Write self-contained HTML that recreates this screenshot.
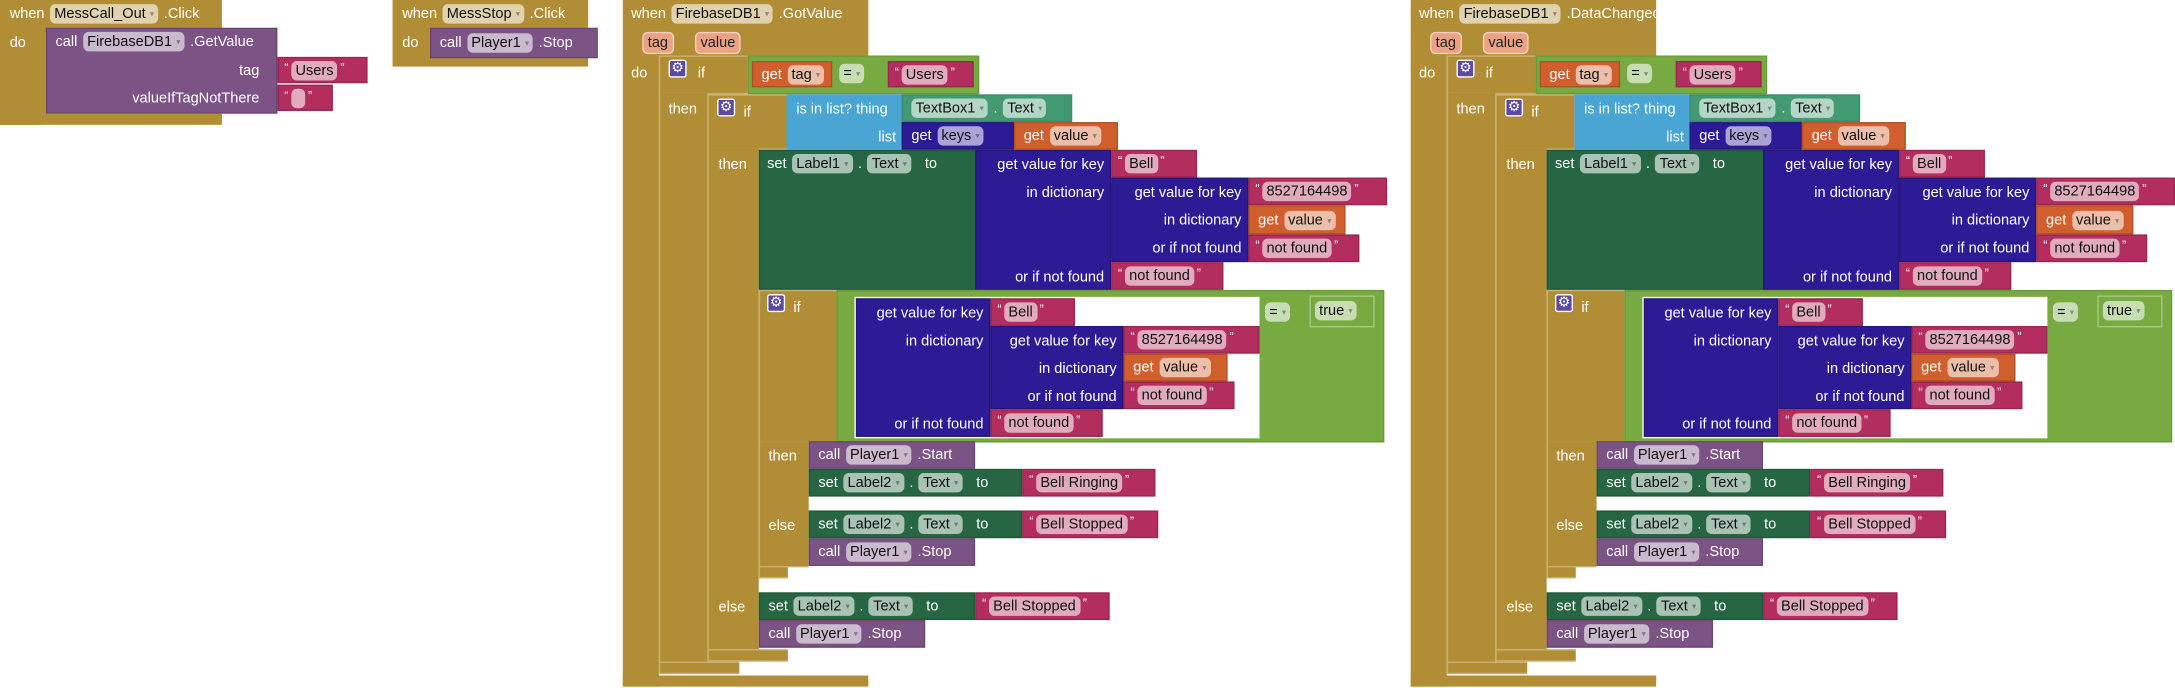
<!DOCTYPE html>
<html><head><meta charset="utf-8"><style>
html,body{margin:0;padding:0;background:#fff;width:2175px;height:688px;overflow:hidden}
#w{position:absolute;left:0;top:0;width:1568px;height:496px;transform:scale(1.38712);transform-origin:0 0;font-family:"Liberation Sans",Arial,sans-serif;font-size:10.5px}
.a{position:absolute;box-sizing:border-box}
.f{display:flex;align-items:center;gap:4px;padding-left:6px;color:#fff;white-space:nowrap}
.h{position:absolute;display:flex;align-items:center;gap:4px;color:#fff;white-space:nowrap;height:20px}
.x{position:absolute;color:#fff;line-height:14px;white-space:nowrap}
.r{text-align:right}
.p{background:rgba(255,255,255,.6);color:#111;border-radius:4px;height:14px;line-height:14px;padding:0 3px;white-space:nowrap;display:inline-block}
.p b{font-weight:normal;font-size:6px;color:rgba(0,0,0,.35);margin-left:3px;vertical-align:1px}
.ap{position:absolute}
.gd{background:#b18e35}
.gc{background:#b18e35;border:1px solid rgba(255,255,255,.3);border-right:none}
.pu{background:#7c5385;border:1px solid rgba(0,0,0,.15)}
.pk{background:#b32d5e;border:1px solid rgba(0,0,0,.15);gap:2px;padding-left:4px}
.pk i{font-style:normal;font-size:9px;margin-top:-4px}
.dg{background:#266643;border:1px solid rgba(0,0,0,.15)}
.in{background:#2d1b96;border:1px solid rgba(0,0,0,.2)}
.or{background:#d05f2d;border:1px solid rgba(0,0,0,.15)}
.lg{background:#77ab41;border:1px solid rgba(0,0,0,.1)}
.bl{background:#49a6d4}
.tl{background:#439a72;border:1px solid rgba(0,0,0,.1)}
.gear{position:absolute;width:13px;height:13px;background:#5b4aa5;border:1px solid #fff;border-radius:2px;box-sizing:border-box;color:#fff;font-size:10px;line-height:11px;text-align:center}
.sal{background:#eba184;color:#222;border:1px solid rgba(255,255,255,.5)}
</style></head><body><div id="w">

<!-- Block A -->
<div class="a gd" style="left:0;top:0;width:160px;height:22px"></div>
<div class="a gd" style="left:0;top:20px;width:33px;height:70px"></div>
<div class="a gd" style="left:0;top:82px;width:160px;height:8px"></div>
<div class="h" style="left:7px;top:0">when<span class="p">MessCall_Out<b>▾</b></span>.Click</div>
<div class="x" style="left:7px;top:24px">do</div>
<div class="a pu" style="left:33px;top:20px;width:167px;height:62px"></div>
<div class="h" style="left:40px;top:20px">call<span class="p">FirebaseDB1<b>▾</b></span>.GetValue</div>
<div class="x r" style="left:60px;width:127px;top:44px">tag</div>
<div class="x r" style="left:60px;width:127px;top:64px">valueIfTagNotThere</div>
<div class="a f pk" style="left:200px;top:41px;width:65px;height:19px"><i>“</i><span class="p">Users</span><i>”</i></div>
<div class="a f pk" style="left:200px;top:61px;width:40px;height:19px"><i>“</i><span class="p" style="width:4px"></span><i>”</i></div>

<!-- Block B -->
<div class="a gd" style="left:283px;top:0;width:141px;height:48px"></div>
<div class="h" style="left:290px;top:0">when<span class="p">MessStop<b>▾</b></span>.Click</div>
<div class="x" style="left:290px;top:24px">do</div>
<div class="a f pu" style="left:310px;top:20px;width:121px;height:22px">call<span class="p">Player1<b>▾</b></span>.Stop</div>

<!-- Block C / D template -->
<div id="C" class="a" style="left:0;top:0;width:1px;height:1px">
<div class="a gd" style="left:449px;top:0;width:177px;height:40px"></div>
<div class="a gd" style="left:449px;top:40px;width:26px;height:455px"></div>
<div class="a gd" style="left:449px;top:487px;width:177px;height:8px"></div>
<div class="h" style="left:455px;top:0">when<span class="p">FirebaseDB1<b>▾</b></span><span class="ev">.GotValue</span></div>
<span class="p ap sal" style="left:463px;top:23px">tag</span>
<span class="p ap sal" style="left:501px;top:23px">value</span>
<div class="x" style="left:455px;top:46px">do</div>

<!-- if1 -->
<div class="a gc" style="left:475px;top:40px;width:64px;height:28px"></div>
<div class="a gc" style="left:475px;top:67px;width:35px;height:411px;border-top:none"></div>
<div class="a gc" style="left:475px;top:477px;width:58px;height:9px"></div>
<div class="gear" style="left:482px;top:43px">⚙</div>
<div class="x" style="left:503px;top:46px">if</div>
<div class="x" style="left:482px;top:72px">then</div>
<div class="a lg" style="left:539px;top:40px;width:167px;height:28px"></div>
<div class="a f or" style="left:542px;top:44px;width:58px;height:19px">get<span class="p">tag<b>▾</b></span></div>
<span class="p ap" style="left:605px;top:46px">=<b>▾</b></span>
<div class="a f pk" style="left:640px;top:44px;width:62px;height:19px"><i>“</i><span class="p">Users</span><i>”</i></div>

<!-- if2 -->
<div class="a gc" style="left:510px;top:68px;width:57px;height:40px"></div>
<div class="a gc" style="left:510px;top:107px;width:37px;height:362px;border-top:none"></div>
<div class="a gc" style="left:510px;top:468px;width:58px;height:9px"></div>
<div class="gear" style="left:517px;top:71px">⚙</div>
<div class="x" style="left:536px;top:74px">if</div>
<div class="x" style="left:518px;top:112px">then</div>
<div class="x" style="left:518px;top:431px">else</div>
<div class="a bl" style="left:567px;top:68px;width:84px;height:40px"></div>
<div class="x" style="left:574px;top:72px">is in list? thing</div>
<div class="x r" style="left:600px;width:46px;top:92px">list</div>
<div class="a f tl" style="left:650px;top:68px;width:123px;height:20px"><span class="p">TextBox1<b>▾</b></span>.<span class="p">Text<b>▾</b></span></div>
<div class="a f in" style="left:650px;top:88px;width:81px;height:20px">get<span class="p">keys<b>▾</b></span></div>
<div class="a f or" style="left:731px;top:88px;width:75px;height:20px">get<span class="p">value<b>▾</b></span></div>

<!-- set Label1 -->
<div class="a dg" style="left:547px;top:108px;width:157px;height:101px"></div>
<div class="a f" style="left:547px;top:108px;height:20px">set<span class="p">Label1<b>▾</b></span>.<span class="p">Text<b>▾</b></span><span style="margin-left:6px">to</span></div>
<div class="a in" style="left:703px;top:108px;width:98px;height:101px"></div>
<div class="x r" style="left:703px;width:93px;top:112px">get value for key</div>
<div class="x r" style="left:703px;width:93px;top:132px">in dictionary</div>
<div class="x r" style="left:703px;width:93px;top:193px">or if not found</div>
<div class="a in" style="left:801px;top:128px;width:99px;height:61px"></div>
<div class="x r" style="left:801px;width:94px;top:132px">get value for key</div>
<div class="x r" style="left:801px;width:94px;top:152px">in dictionary</div>
<div class="x r" style="left:801px;width:94px;top:172px">or if not found</div>
<div class="a f pk" style="left:801px;top:108px;width:62px;height:20px"><i>“</i><span class="p">Bell</span><i>”</i></div>
<div class="a f pk" style="left:900px;top:128px;width:100px;height:20px"><i>“</i><span class="p">8527164498</span><i>”</i></div>
<div class="a f or" style="left:900px;top:148px;width:70px;height:21px">get<span class="p">value<b>▾</b></span></div>
<div class="a f pk" style="left:900px;top:169px;width:80px;height:20px"><i>“</i><span class="p">not found</span><i>”</i></div>
<div class="a f pk" style="left:801px;top:189px;width:81px;height:20px"><i>“</i><span class="p">not found</span><i>”</i></div>

<!-- if3 -->
<div class="a gc" style="left:547px;top:209px;width:56px;height:110px"></div>
<div class="a gc" style="left:547px;top:318px;width:36px;height:91px;border-top:none"></div>
<div class="a gc" style="left:547px;top:408px;width:21px;height:9px"></div>
<div class="gear" style="left:553px;top:212px">⚙</div>
<div class="x" style="left:572px;top:215px">if</div>
<div class="x" style="left:554px;top:322px">then</div>
<div class="x" style="left:554px;top:372px">else</div>
<div class="a lg" style="left:603px;top:209px;width:395px;height:110px"></div>
<div class="a" style="left:616px;top:214px;width:292px;height:102px;background:#fff"></div>
<div class="a in" style="left:617px;top:215px;width:97px;height:100px"></div>
<div class="x r" style="left:617px;width:92px;top:219px">get value for key</div>
<div class="x r" style="left:617px;width:92px;top:239px">in dictionary</div>
<div class="x r" style="left:617px;width:92px;top:299px">or if not found</div>
<div class="a in" style="left:714px;top:235px;width:96px;height:60px"></div>
<div class="x r" style="left:714px;width:91px;top:239px">get value for key</div>
<div class="x r" style="left:714px;width:91px;top:259px">in dictionary</div>
<div class="x r" style="left:714px;width:91px;top:279px">or if not found</div>
<div class="a f pk" style="left:714px;top:215px;width:61px;height:20px"><i>“</i><span class="p">Bell</span><i>”</i></div>
<div class="a f pk" style="left:810px;top:235px;width:98px;height:20px"><i>“</i><span class="p">8527164498</span><i>”</i></div>
<div class="a f or" style="left:810px;top:255px;width:75px;height:20px">get<span class="p">value<b>▾</b></span></div>
<div class="a f pk" style="left:810px;top:275px;width:80px;height:20px"><i>“</i><span class="p">not found</span><i>”</i></div>
<div class="a f pk" style="left:714px;top:295px;width:81px;height:20px"><i>“</i><span class="p">not found</span><i>”</i></div>
<span class="p ap" style="left:912px;top:218px">=<b>▾</b></span>
<div class="a" style="left:944px;top:213px;width:47px;height:23px;border:1px solid rgba(255,255,255,.35);background:#77ab41"></div>
<span class="p ap" style="left:948px;top:217px">true<b>▾</b></span>

<div class="a f pu" style="left:583px;top:318px;width:120px;height:20px">call<span class="p">Player1<b>▾</b></span>.Start</div>
<div class="a f dg" style="left:583px;top:338px;width:154px;height:20px">set<span class="p">Label2<b>▾</b></span>.<span class="p">Text<b>▾</b></span><span style="margin-left:6px">to</span></div>
<div class="a f pk" style="left:737px;top:338px;width:96px;height:20px"><i>“</i><span class="p">Bell Ringing</span><i>”</i></div>
<div class="a f dg" style="left:583px;top:368px;width:154px;height:20px">set<span class="p">Label2<b>▾</b></span>.<span class="p">Text<b>▾</b></span><span style="margin-left:6px">to</span></div>
<div class="a f pk" style="left:737px;top:368px;width:98px;height:20px"><i>“</i><span class="p">Bell Stopped</span><i>”</i></div>
<div class="a f pu" style="left:583px;top:388px;width:120px;height:20px">call<span class="p">Player1<b>▾</b></span>.Stop</div>

<div class="a f dg" style="left:547px;top:427px;width:156px;height:20px">set<span class="p">Label2<b>▾</b></span>.<span class="p">Text<b>▾</b></span><span style="margin-left:6px">to</span></div>
<div class="a f pk" style="left:703px;top:427px;width:97px;height:20px"><i>“</i><span class="p">Bell Stopped</span><i>”</i></div>
<div class="a f pu" style="left:547px;top:447px;width:120px;height:20px">call<span class="p">Player1<b>▾</b></span>.Stop</div>
</div>
</div>
<script>
var c=document.getElementById('C');var d=c.cloneNode(true);d.id='D';d.style.left='568px';
d.querySelector('.ev').textContent='.DataChanged';
document.getElementById('w').appendChild(d);
</script>
</body></html>
